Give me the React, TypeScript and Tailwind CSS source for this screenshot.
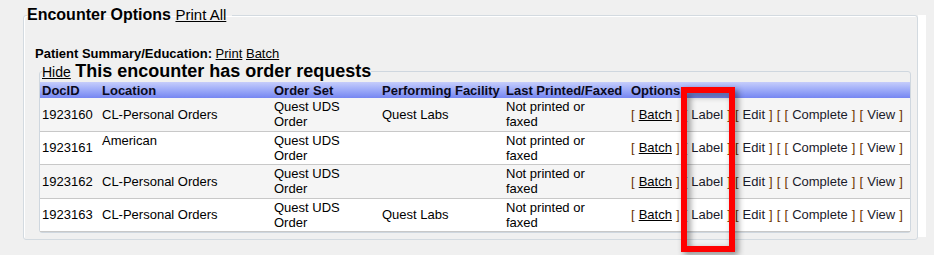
import React from "react";

type Row = {
  id: string;
  location: React.ReactNode;
  facility: string;
  shade: boolean;
};

const ROWS: Row[] = [
  { id: "1923160", location: "CL-Personal Orders", facility: "Quest Labs", shade: true },
  { id: "1923161", location: <div className="self-start">American<br />&nbsp;</div>, facility: "", shade: false },
  { id: "1923162", location: "CL-Personal Orders", facility: "", shade: true },
  { id: "1923163", location: "CL-Personal Orders", facility: "Quest Labs", shade: false },
];

const Br = ({ c }: { c: string }) => <span className="text-[#6b3300]">{c}</span>;

function Options() {
  return (
    <span className="whitespace-nowrap text-[#1a1a2a] [word-spacing:0.45px]">
      <Br c="[" /> <a className="underline text-black">Batch</a> <Br c="]" />{" "}
      <Br c="[" /> Label <Br c="]" /> <Br c="[" /> Edit <Br c="]" />{" "}
      <Br c="[" /> <Br c="[" /> Complete <Br c="]" /> <Br c="[" /> View <Br c="]" />
    </span>
  );
}

export default function App() {
  const th = "px-[2px] text-left font-bold leading-[15px] py-[0.5px] text-[#0a0a20]";
  const td = "px-[2px] py-[1.25px] leading-[15px] align-middle border-b border-[#c8c8c8]";

  return (
    <div
      className="relative w-[934px] h-[255px] overflow-hidden bg-[#f0f0f0] text-black"
      style={{ fontFamily: '"Liberation Sans", Arial, sans-serif' }}
    >
      <div className="flex pt-[6px] pl-[23px]">
        {/* Encounter options group */}
        <fieldset className="w-[895px] border border-[#d3dae0] rounded-[3px] pl-[3px] pb-[6px] shadow-[inset_1px_1px_0_#fff]">
          <legend className="pr-[6px] leading-[18px]">
            <span className="text-[16px] font-bold">Encounter Options</span>{" "}
            <a className="text-[15px] underline">Print All</a>
          </legend>

          <div className="ml-[8px] pt-[22px] text-[13px] leading-[15px]">
            <span className="font-bold">Patient Summary/Education:</span>{" "}
            <a className="underline">Print</a> <a className="underline">Batch</a>
          </div>

          {/* Order requests group */}
          <fieldset className="ml-[12px] w-[872px] border border-[#cfd7df] rounded-[3px]">
            <legend className="ml-[2px] leading-[20px]">
              <a className="text-[14px] underline">Hide</a>{" "}
              <span className="text-[18px] font-bold">This encounter has order requests</span>
            </legend>

            <table className="w-[870px] table-fixed border-collapse text-[13px]">
              <colgroup>
                <col className="w-[60px]" />
                <col className="w-[172px]" />
                <col className="w-[108px]" />
                <col className="w-[124px]" />
                <col className="w-[125px]" />
                <col />
              </colgroup>
              <thead>
                <tr className="bg-gradient-to-b from-[#c6cdfb] to-[#7686f2]">
                  <th className={th}>DocID</th>
                  <th className={th}>Location</th>
                  <th className={th}>Order Set</th>
                  <th className={th}>Performing Facility</th>
                  <th className={th}>Last Printed/Faxed</th>
                  <th className={th}>Options</th>
                </tr>
              </thead>
              <tbody>
                {ROWS.map((r) => (
                  <tr key={r.id} className={r.shade ? "bg-[#f5f5f5]" : "bg-white"}>
                    <td className={td}>{r.id}</td>
                    <td className={td}>
                      <div className="flex">{r.location}</div>
                    </td>
                    <td className={td}>
                      Quest UDS
                      <br />
                      Order
                    </td>
                    <td className={td}>{r.facility}</td>
                    <td className={td}>
                      Not printed or
                      <br />
                      faxed
                    </td>
                    <td className={td}>
                      <Options />
                    </td>
                  </tr>
                ))}
              </tbody>
            </table>
          </fieldset>
        </fieldset>
        <div className="mt-[9px] mb-[3px] w-[8px] bg-white" />
      </div>

      {/* highlight annotation */}
      <div className="absolute left-[681px] top-[87px] w-[54px] h-[165px] border-[6px] border-[#ff0000] drop-shadow-[3px_3px_3px_rgba(0,0,0,0.45)]" />
    </div>
  );
}
